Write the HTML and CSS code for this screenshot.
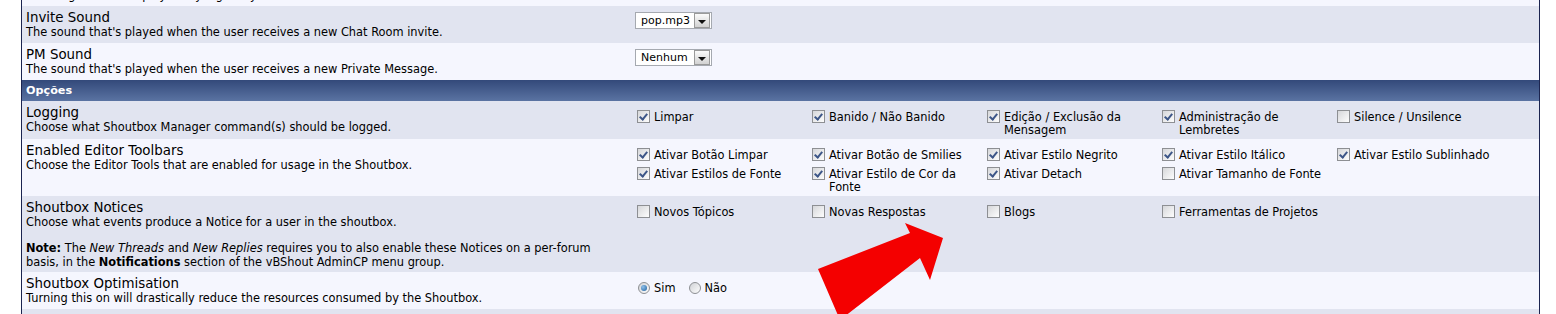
FILE: index.html
```html
<!DOCTYPE html>
<html lang="pt">
<head>
<meta charset="UTF-8">
<title>vBShout - Opções</title>
<link rel="stylesheet" href="styles.css">
</head>
<body>
<div class="page">
  <div class="tborder">

    <div class="row alt2">
      <div class="label">
        <div class="title">Log Display</div>
        <div class="desc">Enabling this will display every log entry in the Shoutbox.</div>
      </div>
      <div class="field"></div>
    </div>

    <div class="row alt1">
      <div class="label">
        <div class="title">Invite Sound</div>
        <div class="desc">The sound that's played when the user receives a new Chat Room invite.</div>
      </div>
      <div class="field sel">
        <span class="select"><span class="val">pop.mp3</span><span class="btn"><i></i></span></span>
      </div>
    </div>

    <div class="row alt2">
      <div class="label">
        <div class="title">PM Sound</div>
        <div class="desc">The sound that's played when the user receives a new Private Message.</div>
      </div>
      <div class="field sel">
        <span class="select"><span class="val">Nenhum</span><span class="btn"><i></i></span></span>
      </div>
    </div>

    <div class="tcat">Opções</div>

    <div class="row alt1">
      <div class="label">
        <div class="title">Logging</div>
        <div class="desc">Choose what Shoutbox Manager command(s) should be logged.</div>
      </div>
      <div class="field">
        <div class="checks">
          <label class="opt"><span class="cb on"></span><span>Limpar</span></label>
          <label class="opt"><span class="cb on"></span><span>Banido / Não Banido</span></label>
          <label class="opt"><span class="cb on"></span><span>Edição / Exclusão da Mensagem</span></label>
          <label class="opt"><span class="cb on"></span><span>Administração de Lembretes</span></label>
          <label class="opt"><span class="cb"></span><span>Silence / Unsilence</span></label>
        </div>
      </div>
    </div>

    <div class="row alt2">
      <div class="label">
        <div class="title">Enabled Editor Toolbars</div>
        <div class="desc">Choose the Editor Tools that are enabled for usage in the Shoutbox.</div>
      </div>
      <div class="field">
        <div class="checks">
          <label class="opt"><span class="cb on"></span><span>Ativar Botão Limpar</span></label>
          <label class="opt"><span class="cb on"></span><span>Ativar Botão de Smilies</span></label>
          <label class="opt"><span class="cb on"></span><span>Ativar Estilo Negrito</span></label>
          <label class="opt"><span class="cb on"></span><span>Ativar Estilo Itálico</span></label>
          <label class="opt"><span class="cb on"></span><span>Ativar Estilo Sublinhado</span></label>
          <label class="opt"><span class="cb on"></span><span>Ativar Estilos de Fonte</span></label>
          <label class="opt"><span class="cb on"></span><span>Ativar Estilo de Cor da Fonte</span></label>
          <label class="opt"><span class="cb on"></span><span>Ativar Detach</span></label>
          <label class="opt"><span class="cb"></span><span>Ativar Tamanho de Fonte</span></label>
        </div>
      </div>
    </div>

    <div class="row alt1">
      <div class="label notices">
        <div class="title">Shoutbox Notices</div>
        <div class="desc">Choose what events produce a Notice for a user in the shoutbox.</div>
        <div class="desc note"><b>Note:</b> The <i>New Threads</i> and <i>New Replies</i> requires you to also enable these Notices on a per-forum basis, in the <b>Notifications</b> section of the vBShout AdminCP menu group.</div>
      </div>
      <div class="field">
        <div class="checks">
          <label class="opt"><span class="cb"></span><span>Novos Tópicos</span></label>
          <label class="opt"><span class="cb"></span><span>Novas Respostas</span></label>
          <label class="opt"><span class="cb"></span><span>Blogs</span></label>
          <label class="opt"><span class="cb"></span><span>Ferramentas de Projetos</span></label>
        </div>
      </div>
    </div>

    <div class="row alt2">
      <div class="label">
        <div class="title">Shoutbox Optimisation</div>
        <div class="desc">Turning this on will drastically reduce the resources consumed by the Shoutbox.</div>
      </div>
      <div class="field">
        <div class="radios">
          <label class="opt"><span class="rd on"></span><span>Sim</span></label>
          <label class="opt"><span class="rd"></span><span>Não</span></label>
        </div>
      </div>
    </div>

    <div class="row alt1 last">
      <div class="label"></div>
      <div class="field"></div>
    </div>

  </div>

  <svg class="arrow" width="150" height="100" viewBox="0 0 150 100">
    <polygon points="21,47 113,11 108,1 146,16 133,58 123,36 43,98" fill="#f40000"/>
  </svg>
</div>
</body>
</html>
```

FILE: styles.css
```css
body {
  margin: 0;
  background-color: #fff;
  font-family: "DejaVu Sans", Verdana, sans-serif;
  color: #000;
  overflow: hidden;
}

.page {
  display: flow-root;
  position: relative;
  margin: 0 16px 0 21px;
}

.tborder {
  border-left: 1px solid #1b2450;
  border-right: 1px solid #1b2450;
  margin-top: -31px;
}

.row {
  display: grid;
  grid-template-columns: 609px 1fr;
}

.row.last {
  height: 20px;
}

.alt1 {
  background-color: #e1e4f0;
}

.alt2 {
  background-color: #f5f6fe;
}

.label {
  padding: 4px 4px 4px 4px;
}

.label.notices {
  padding-bottom: 3px;
}

.title {
  font-size: 13.4px;
  line-height: 16px;
}

.desc {
  font-size: 11.4px;
  line-height: 13px;
}

.note {
  margin-top: 12px;
  line-height: 14px;
}

.field {
  padding: 7px 4px 2px 4px;
  font-size: 11.4px;
  line-height: 13px;
}

.field.sel {
  padding-top: 4px;
}

/* select imitation */
.select {
  display: inline-flex;
  align-items: center;
  margin-top: 2px;
  width: 75px;
  height: 15px;
  border: 1px solid #a5a9b0;
  background-color: #fff;
  font-size: 11px;
}

.select .val {
  flex: 1;
  padding-left: 5px;
}

.select .btn {
  width: 14px;
  height: 13px;
  margin-right: 1px;
  border: 1px solid #9a9a9a;
  background: linear-gradient(#fbfbfb, #d2d2d2);
  display: flex;
  align-items: center;
  justify-content: center;
}

.select .btn i {
  width: 0;
  height: 0;
  border-left: 4px solid transparent;
  border-right: 4px solid transparent;
  border-top: 4px solid #111;
  margin-top: 2px;
}

.tcat {
  height: 21px;
  line-height: 21px;
  padding-left: 4px;
  background: linear-gradient(#33497a, #5a73a2);
  color: #fff;
  font-size: 11.2px;
  font-weight: bold;
}

/* checkboxes */
.checks {
  display: grid;
  grid-template-columns: repeat(5, 175px);
}

.opt {
  display: flex;
  align-items: flex-start;
}

.opt span:last-child {
  padding-top: 3px;
}

.cb {
  flex: none;
  width: 11px;
  height: 11px;
  margin: 2px 4px 4px 2px;
  border: 1px solid #8d8f93;
  background: linear-gradient(135deg, #d6d7da, #fdfdfd);
  position: relative;
}

.cb.on::after {
  content: "";
  position: absolute;
  left: 3px;
  top: 1px;
  width: 3px;
  height: 6px;
  border-right: 2px solid #3d5688;
  border-bottom: 2px solid #3d5688;
  transform: rotate(40deg);
}

.radios {
  display: flex;
  gap: 10px;
}

.rd {
  flex: none;
  width: 10px;
  height: 10px;
  margin: 3px 4px 3px 3px;
  border: 1px solid #8d8f93;
  border-radius: 50%;
  background: linear-gradient(135deg, #d0d2d6, #fdfdfd);
  position: relative;
}

.rd.on::after {
  content: "";
  position: absolute;
  left: 2px;
  top: 2px;
  width: 6px;
  height: 6px;
  border-radius: 50%;
  background: radial-gradient(circle at 35% 35%, #8fc0ea, #1d5f9e);
}

.arrow {
  position: absolute;
  left: 776px;
  top: 222px;
}
```
